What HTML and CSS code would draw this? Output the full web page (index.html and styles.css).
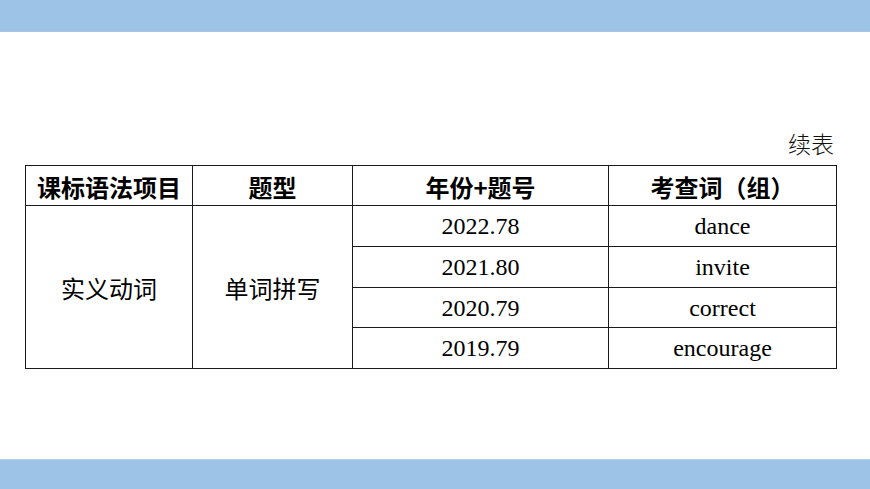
FILE: index.html
```html
<!DOCTYPE html>
<html lang="zh">
<head>
<meta charset="utf-8">
<link rel="stylesheet" href="styles.css">
</head>
<body>
<div class="page">
  <div class="bar top"></div>
  <div class="content">
    <div class="caption">续表</div>
    <table class="grid">
      <colgroup>
        <col class="c1"><col class="c2"><col class="c3"><col class="c4">
      </colgroup>
      <thead>
        <tr class="head">
          <th>课标语法项目</th>
          <th>题型</th>
          <th>年份+题号</th>
          <th>考查词（组）</th>
        </tr>
      </thead>
      <tbody>
        <tr>
          <td rowspan="4" class="zh">实义动词</td>
          <td rowspan="4" class="zh">单词拼写</td>
          <td class="en">2022.78</td>
          <td class="en">dance</td>
        </tr>
        <tr><td class="en">2021.80</td><td class="en">invite</td></tr>
        <tr><td class="en">2020.79</td><td class="en">correct</td></tr>
        <tr><td class="en">2019.79</td><td class="en">encourage</td></tr>
      </tbody>
    </table>
  </div>
  <div class="bar bottom"></div>
</div>
</body>
</html>
```

FILE: styles.css
```css
html, body {
  margin: 0;
  padding: 0;
  background: #ffffff;
}
.page {
  width: 870px;
  height: 489px;
  display: flex;
  flex-direction: column;
  overflow: hidden;
}
.bar {
  background: #9dc3e6;
  flex: none;
}
.bar.top {
  height: 32px;
  border-bottom: 1px solid #a6c6e6;
  box-sizing: border-box;
}
.bar.bottom {
  height: 30px;
  border-top: 1px solid #b4cfe6;
  box-sizing: border-box;
}
.content {
  flex: 1;
  padding: 99px 0 0 25px;
  box-sizing: border-box;
}
.caption {
  width: 809px;
  text-align: right;
  height: 34px;
  line-height: 24px;
  font-family: "Noto Sans CJK SC", sans-serif;
  font-weight: 300;
  font-size: 23px;
  color: #111;
}
.grid {
  border-collapse: collapse;
  table-layout: fixed;
  width: 811px;
}
.c1 { width: 167px; }
.c2 { width: 160px; }
.c3 { width: 256px; }
.c4 { width: 228px; }
.grid th, .grid td {
  border: 1px solid #1a1a1a;
  padding: 0;
  text-align: center;
  color: #000;
}
.head th {
  font-family: "Noto Sans CJK SC", sans-serif;
  font-weight: 700;
  font-size: 24px;
  line-height: 37px;
  padding-top: 2px;
}
.zh {
  font-family: "Noto Sans CJK SC", sans-serif;
  font-weight: 400;
  font-size: 24px;
}
.grid .en {
  font-family: "Liberation Serif", "Times New Roman", serif;
  font-size: 24px;
  line-height: 37.75px;
  padding-top: 2px;
}
```
